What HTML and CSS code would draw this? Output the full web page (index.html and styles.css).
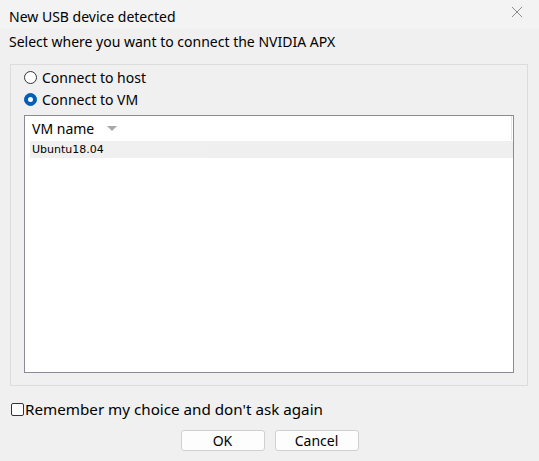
FILE: index.html
```html
<!DOCTYPE html>
<html>
<head>
<meta charset="utf-8">
<link rel="stylesheet" href="styles.css">
</head>
<body>
<div class="dialog">
  <div class="titlebar">
    <span class="title">New USB device detected</span>
    <svg class="close" width="12" height="12" viewBox="0 0 12 12"><path d="M1 1 L11 11 M11 1 L1 11" stroke="#8a8a8a" stroke-width="1" fill="none"/></svg>
  </div>
  <div class="prompt">Select where you want to connect the NVIDIA APX</div>
  <div class="group">
    <label class="radio"><span class="rb"></span>Connect to host</label>
    <label class="radio"><span class="rb on"></span>Connect to VM</label>
    <div class="list">
      <div class="header">
        <span class="hcell">VM name</span>
        <svg class="sort" width="10" height="6" viewBox="0 0 10 6"><path d="M0 0 L10 0 L5 5 Z" fill="#a8a8a8"/></svg>
      </div>
      <div class="row"><span class="cell">Ubuntu18.04</span></div>
    </div>
  </div>
  <label class="check"><span class="cb"></span>Remember my choice and don't ask again</label>
  <div class="buttons">
    <button class="btn">OK</button>
    <button class="btn">Cancel</button>
  </div>
</div>
</body>
</html>
```
FILE: styles.css
```css
html, body {
  margin: 0;
  padding: 0;
}
body {
  width: 539px;
  height: 461px;
  background: #f0f0f0;
  font-family: "Noto Sans", "Open Sans", sans-serif;
  font-size: 14px;
  color: #000;
  overflow: hidden;
}
.dialog {
  display: flex;
  flex-direction: column;
  height: 461px;
}
.titlebar {
  height: 28px;
  background: #f3f3f3;
  display: flex;
  align-items: center;
  justify-content: space-between;
  padding: 6px 16px 0 9px;
  box-sizing: border-box;
}
.title {
  line-height: 18px;
}
.close {
  margin-top: -11px;
}
.prompt {
  padding-left: 9px;
  height: 30px;
  line-height: 30px;
  margin-top: -1px;
}
.group {
  margin: 7px 0 0 10px;
  width: 518px;
  height: 322px;
  border: 1px solid #dcdcdc;
  box-sizing: border-box;
  padding: 1px 13px 12px 13px;
  display: flex;
  flex-direction: column;
}
.radio {
  display: flex;
  align-items: center;
  height: 22px;
}
.rb {
  width: 11px;
  height: 11px;
  border: 1px solid #333;
  border-radius: 50%;
  background: #fff;
  margin: 0 5px 0 0;
  box-sizing: content-box;
  position: relative;
}
.rb.on {
  border-color: #005fb8;
  background: #005fb8;
}
.rb.on::after {
  content: "";
  position: absolute;
  left: 3px;
  top: 3px;
  width: 5px;
  height: 5px;
  border-radius: 50%;
  background: #fff;
}
.list {
  margin-top: 5px;
  flex: 1;
  border: 1px solid #8b8a99;
  background: #fff;
  display: flex;
  flex-direction: column;
}
.header {
  height: 24px;
  display: flex;
  align-items: center;
  padding-left: 7px;
  margin-right: 1px;
  border-right: 1px solid #e4e4e4;
}
.hcell {
  margin-right: 13px;
}
.sort {
  margin-top: 2px;
}
.row {
  margin: 1px 0 0 5px;
  height: 17px;
  background: #efefef;
  display: flex;
  align-items: center;
  font-family: "DejaVu Sans", sans-serif;
  font-size: 11px;
}
.cell {
  padding-left: 2px;
  width: 177px;
  background: #f0f0f0;
  height: 17px;
  line-height: 17px;
}
.check {
  display: flex;
  align-items: center;
  height: 20px;
  margin: 13px 0 0 11px;
  font-size: 15.2px;
}
.cb {
  width: 11px;
  height: 11px;
  border: 1px solid #333;
  border-radius: 2px;
  background: #fff;
  margin-right: 1px;
}
.buttons {
  display: flex;
  justify-content: center;
  gap: 10px;
  margin-top: 11px;
  padding-right: 0;
}
.btn {
  width: 84px;
  height: 21px;
  padding: 0;
  border: 1px solid #d0d0d0;
  border-radius: 3px;
  background: #fdfdfd;
  font-family: "Noto Sans", "Open Sans", sans-serif;
  font-size: 14px;
  color: #000;
  line-height: 19px;
}
```
